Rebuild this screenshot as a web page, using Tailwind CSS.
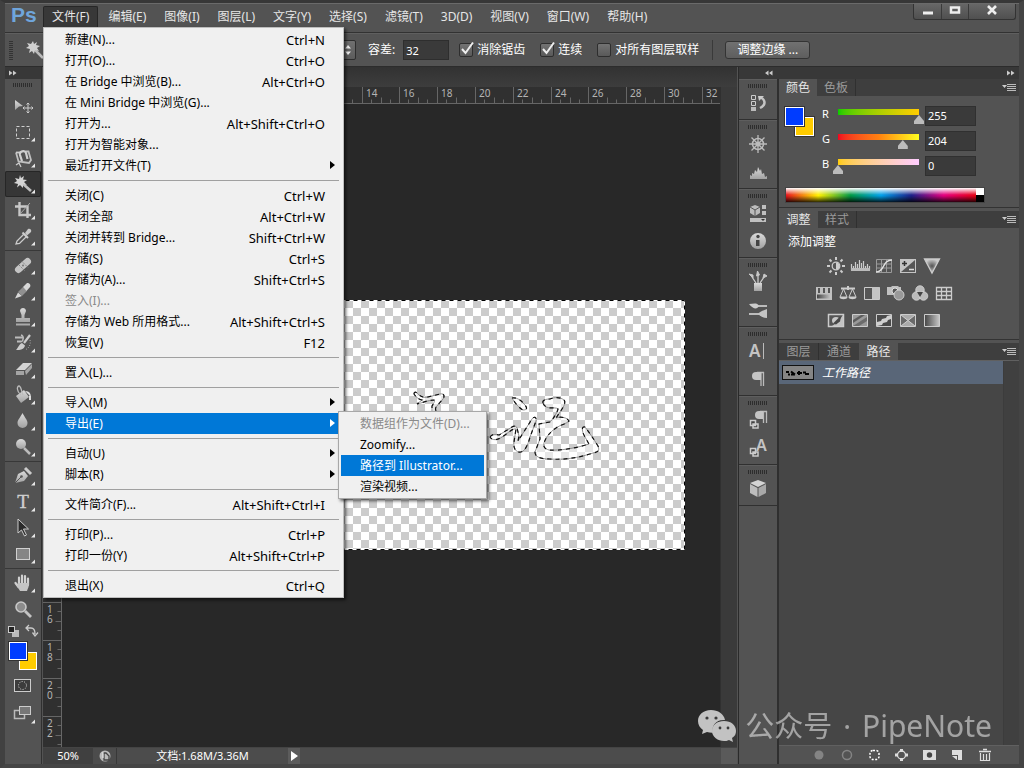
<!DOCTYPE html>
<html lang="zh-CN">

<head>
    <meta charset="UTF-8">
    <meta name="viewport" content="width=device-width, initial-scale=1.0">
    <title>Ps</title>
    <script src="https://cdn.jsdelivr.net/npm/@tailwindcss/browser@4"></script>
</head>

<body class="h-screen overflow-hidden bg-[#3a3a3a] font-['Noto_Sans','Noto_Sans_CJK_SC',sans-serif] text-[12px] leading-4 text-[#e6e6e6]">

    <!-- shared icon parts -->
    <svg width="0" height="0" class="absolute">
        <defs>
            <linearGradient id="metal" x1="0" y1="0" x2="0" y2="1">
                <stop offset="0" stop-color="#dadada" />
                <stop offset="1" stop-color="#a2a2a2" />
            </linearGradient>
            <linearGradient id="fade" x1="0" y1="0" x2="1" y2="0">
                <stop offset="0" stop-color="#444" />
                <stop offset="1" stop-color="#c8c8c8" />
            </linearGradient>
            <radialGradient id="glow">
                <stop offset="0" stop-color="#555" />
                <stop offset="1" stop-color="#ccc" />
            </radialGradient>
            <pattern id="checker" width="16" height="16" patternUnits="userSpaceOnUse">
                <rect width="16" height="16" fill="#fff" />
                <path d="M8 0h8v8h-8zM0 8h8v8H0z" fill="#ccc" />
            </pattern>
        </defs>
        <symbol id="corner" viewBox="0 0 36 26">
            <path d="M30 18.500v4h-4z" fill="#e8e8e8" />
        </symbol>
        <symbol id="flyout" viewBox="0 0 14 9">
            <path d="M0 2h5L2.500 5z" fill="#ccc" />
            <path d="M5 1.500h9M5 3.500h9M5 5.500h9M5 7.500h9" stroke="#bbb" />
        </symbol>
    </svg>

    <div class="flex h-full flex-col border-b-4 border-l-[5px] border-r-[5px] border-t-[3px] border-b-[#454545] border-l-[#414141] border-r-[#444] border-t-[#373737] bg-[#535353]">

        <!-- title and menu bar -->
        <header class="relative z-40 flex h-[30px] shrink-0 items-start border-b border-[#323232] border-t border-t-[#6a6a6a]">
            <div class="w-[38px] pl-1.5 pt-[3px] font-['Liberation_Sans',sans-serif] text-[21px] font-bold leading-4 text-[#6fa5dc]">Ps</div>
            <nav class="flex gap-0.5 pt-[2px] [&_button]:px-2 [&_button]:py-0.5 [&_button]:whitespace-nowrap">
                <div class="relative">
                    <button class="rounded-t-[2px] border-x border-t border-[#262626] bg-[#383838]">文件(F)</button>
                    <ul class="absolute left-0 top-[21px] w-[301px] border border-[#bdbdbd] bg-[#f0f0f0] px-0.5 py-px text-black shadow-[2px_2px_3px_rgba(0,0,0,0.6)] [&_button]:flex [&_button]:h-[21px] [&_button]:w-full [&_button]:items-center [&_button]:justify-between [&_button]:py-0 [&_button]:pl-[19px] [&_button]:pr-4 [&_hr]:mx-0.5 [&_hr]:my-1 [&_hr]:border-[#a0a0a0] [&_kbd]:font-[inherit] [&_kbd]:text-[13px]">
                        <li><button>新建(N)...<kbd>Ctrl+N</kbd></button></li>
                        <li><button>打开(O)...<kbd>Ctrl+O</kbd></button></li>
                        <li><button>在 Bridge 中浏览(B)...<kbd>Alt+Ctrl+O</kbd></button></li>
                        <li><button>在 Mini Bridge 中浏览(G)...</button></li>
                        <li><button>打开为...<kbd>Alt+Shift+Ctrl+O</kbd></button></li>
                        <li><button>打开为智能对象...</button></li>
                        <li class="relative"><button>最近打开文件(T)</button><svg class="absolute right-1.5 top-1.5" width="5" height="8"><path d="M0 0l5 4-5 4z" /></svg></li>
                        <li><hr></li>
                        <li><button>关闭(C)<kbd>Ctrl+W</kbd></button></li>
                        <li><button>关闭全部<kbd>Alt+Ctrl+W</kbd></button></li>
                        <li><button>关闭并转到 Bridge...<kbd>Shift+Ctrl+W</kbd></button></li>
                        <li><button>存储(S)<kbd>Ctrl+S</kbd></button></li>
                        <li><button>存储为(A)...<kbd>Shift+Ctrl+S</kbd></button></li>
                        <li><button disabled class="text-[#8a8a8a]">签入(I)...</button></li>
                        <li><button>存储为 Web 所用格式...<kbd>Alt+Shift+Ctrl+S</kbd></button></li>
                        <li><button>恢复(V)<kbd>F12</kbd></button></li>
                        <li><hr></li>
                        <li><button>置入(L)...</button></li>
                        <li><hr></li>
                        <li class="relative"><button>导入(M)</button><svg class="absolute right-1.5 top-1.5" width="5" height="8"><path d="M0 0l5 4-5 4z" /></svg></li>
                        <li class="relative">
                            <button class="bg-[#0078d7] text-white">导出(E)</button><svg class="absolute right-1.5 top-1.5" width="5" height="8"><path d="M0 0l5 4-5 4z" fill="#fff" /></svg>
                            <ul class="absolute left-full top-[-2px] -ml-[3px] w-[149px] border border-[#a8a8a8] bg-[#f0f0f0] px-0.5 py-px shadow-[2px_2px_3px_rgba(0,0,0,0.6)]">
                                <li><button disabled class="text-[#8a8a8a]">数据组作为文件(D)...</button></li>
                                <li><button>Zoomify...</button></li>
                                <li><button class="bg-[#0078d7] text-white">路径到 Illustrator...</button></li>
                                <li><button>渲染视频...</button></li>
                            </ul>
                        </li>
                        <li><hr></li>
                        <li class="relative"><button>自动(U)</button><svg class="absolute right-1.5 top-1.5" width="5" height="8"><path d="M0 0l5 4-5 4z" /></svg></li>
                        <li class="relative"><button>脚本(R)</button><svg class="absolute right-1.5 top-1.5" width="5" height="8"><path d="M0 0l5 4-5 4z" /></svg></li>
                        <li><hr></li>
                        <li><button>文件简介(F)...<kbd>Alt+Shift+Ctrl+I</kbd></button></li>
                        <li><hr></li>
                        <li><button>打印(P)...<kbd>Ctrl+P</kbd></button></li>
                        <li><button>打印一份(Y)<kbd>Alt+Shift+Ctrl+P</kbd></button></li>
                        <li><hr></li>
                        <li><button>退出(X)<kbd>Ctrl+Q</kbd></button></li>
                    </ul>
                </div>
                <button>编辑(E)</button>
                <button>图像(I)</button>
                <button>图层(L)</button>
                <button>文字(Y)</button>
                <button>选择(S)</button>
                <button>滤镜(T)</button>
                <button>3D(D)</button>
                <button>视图(V)</button>
                <button>窗口(W)</button>
                <button>帮助(H)</button>
            </nav>
            <div class="ml-auto mr-[3px] flex h-4 rounded-b-[3px] border border-t-0 border-[#333] bg-linear-to-b from-[#666] to-[#505050]">
                <button aria-label="最小化" class="flex w-7 justify-center border-r border-[#3a3a3a]"><svg width="12" height="14"><path d="M1 7.500h10v3H1z" fill="#eee" /></svg></button>
                <button aria-label="最大化" class="flex w-[27px] justify-center border-r border-[#3a3a3a]"><svg width="12" height="14"><path d="M2 3.500h8v5H2z" fill="none" stroke="#eee" stroke-width="2.500" /></svg></button>
                <button aria-label="关闭" class="flex w-[46px] justify-center"><svg width="12" height="14"><path d="M2 2l8 8M10 2l-8 8" stroke="#eee" stroke-width="2.600" /></svg></button>
            </div>
        </header>

        <!-- tool options -->
        <section class="relative flex h-[34px] shrink-0 items-center border-b border-[#2c2c2c] border-t border-t-[#5f5f5f] text-white">
            <div class="ml-1 h-5 w-1 bg-[repeating-linear-gradient(0deg,#333_0_1px,transparent_1px_2px)]"></div>
            <svg class="ml-2.5 shrink-0" width="24" height="24" viewBox="0 0 24 24">
                <path d="M11 11l9 9" stroke="#bbb" stroke-width="2.500" />
                <path d="M10 3l1 3 3-2-1 3 4 1-3 2 2 3-4-1-1 4-2-3-3 2 1-4-4-1 3-2-2-3 4 1z" fill="#d0d0d0" />
            </svg>
            <div class="relative ml-6 w-[285px]">
                <select aria-label="取样大小" class="block h-5 w-full appearance-none rounded-[2px] border border-[#2e2e2e] bg-linear-to-b from-[#707070] to-[#5c5c5c]"></select>
                <svg class="pointer-events-none absolute right-1 top-1" width="7" height="12"><path d="M0 4.500L3 1l3 3.500zM0 7.500L3 11l3-3.500z" fill="#eee" /></svg>
            </div>
            <label for="tolerance" class="ml-3">容差:</label>
            <input id="tolerance" value="32" class="ml-2 h-5 w-[46px] border border-[#2e2e2e] bg-[#3a3a3a] px-0.5 text-[11px]">
            <div class="ml-2.5 flex items-center gap-[15px] [&_label]:flex [&_label]:items-center [&_label]:gap-1 [&_span]:relative [&_span]:size-[14px] [&_input]:block [&_input]:size-[14px] [&_input]:appearance-none [&_input]:rounded-[2px] [&_input]:border [&_input]:border-[#2e2e2e] [&_input]:bg-linear-to-b [&_input]:from-[#737373] [&_input]:to-[#595959] [&_svg]:pointer-events-none [&_svg]:absolute [&_svg]:left-0.5 [&_svg]:-top-0.5">
                <label><span><input type="checkbox" checked><svg width="13" height="14"><path d="M1 8l3.500 4L12 1.500" fill="none" stroke="#eee" stroke-width="2" /></svg></span>消除锯齿</label>
                <label><span><input type="checkbox" checked><svg width="13" height="14"><path d="M1 8l3.500 4L12 1.500" fill="none" stroke="#eee" stroke-width="2" /></svg></span>连续</label>
                <label><span><input type="checkbox"></span>对所有图层取样</label>
            </div>
            <div class="ml-[13px] h-5 w-px bg-[#3a3a3a]"></div>
            <button class="ml-3 h-[18px] w-[85px] rounded-[3px] border border-[#343434] bg-linear-to-b from-[#717171] to-[#5e5e5e] leading-4">调整边缘 ...</button>
        </section>

        <div class="flex min-h-0 flex-1">

            <!-- toolbox -->
            <aside class="flex w-[37px] shrink-0 flex-col items-center border-r border-[#303030]">
                <div class="h-3 w-full bg-[#383838] pl-1"><svg width="8" height="12"><path d="M0 3.500L3.500 6 0 8.500zM4 3.500L7.500 6 4 8.500z" fill="#ccc" /></svg></div>
                <div class="mb-1.5 mt-1 h-1 w-5 bg-[repeating-linear-gradient(90deg,#2d2d2d_0_1px,transparent_1px_2px)]"></div>
                <div class="flex flex-col [&_button]:block [&_hr]:my-px [&_hr]:border-[#383838] [&_svg]:block">
                    <button aria-label="移动"><svg width="36" height="26"><path d="M10 7l8 6-4 .5L10 17z" fill="url(#metal)" /><path d="M23 10v10M18 15h10M21.500 11.500L23 10l1.500 1.500M21.500 18.500L23 20l1.500-1.500M19.500 13.500L18 15l1.500 1.500M26.500 13.500L28 15l-1.500 1.500" stroke="#ccc" fill="none" /></svg></button>
                    <button aria-label="选框"><svg width="36" height="26"><rect x="11.500" y="7.500" width="13" height="12" fill="none" stroke="#d0d0d0" stroke-dasharray="3 2" /><use href="#corner" /></svg></button>
                    <button aria-label="套索"><svg width="36" height="26"><path d="M11 7.500l2.500 9L24 18l2-3-2.500-8.500h-3" fill="none" stroke="#c0c0c0" stroke-width="1.800" /><path d="M11 7.500h5" stroke="#ccc" stroke-width="1.800" /><path d="M17 16l-2-6c-1-4 5-5 6-2l1.500 6" fill="none" stroke="#d0d0d0" stroke-width="2.200" /><path d="M11 20l3-2 2 4" fill="none" stroke="#ccc" stroke-width="1.300" /><use href="#corner" /></svg></button>
                    <button aria-label="魔棒" class="rounded-[2px] bg-[#363636] shadow-[inset_0_0_0_1px_#262626]"><svg width="36" height="26"><path d="M17 12l9 8" stroke="#c0c0c0" stroke-width="2.600" /><path d="M15 4l1 3 3-2-1 3.500 4 .5-3 2 3 3-4-1 0 4-3-3-3 2.500 1-3.500-4-1 3-2-2-3 4 1z" fill="#d4d4d4" /><use href="#corner" /></svg></button>
                    <button aria-label="裁剪"><svg width="36" height="26"><path d="M14.500 5v13H26M10 9.500h12.500V21" fill="none" stroke="#c8c8c8" stroke-width="2.400" /><path d="M15 17L25 6" stroke="#aaa" /><use href="#corner" /></svg></button>
                    <button aria-label="吸管"><svg width="36" height="26"><path d="M11 21l1-3 7-7 2.500 2.500-7 7z" fill="none" stroke="#ccc" stroke-width="1.300" /><path d="M17.500 9.500l5.500 5.500" stroke="#ccc" stroke-width="2" /><path d="M20 10l3-4c2-1 4 1 3 3l-4 3.500z" fill="#c8c8c8" /><use href="#corner" /></svg></button>
                    <hr>
                    <button aria-label="修复画笔"><svg width="36" height="26"><path d="M13.500 17.500l9-8" stroke="#c4c4c4" stroke-width="7" stroke-linecap="round" /><path d="M14 13l6 6M17 9.500l6 6" stroke="#808080" stroke-dasharray="1.500 1" /><circle cx="18" cy="13.500" r="1" fill="#777" /><use href="#corner" /></svg></button>
                    <button aria-label="画笔"><svg width="36" height="26"><path d="M10 20.500l3-6 4 3.500z" fill="#d8d8d8" /><path d="M13 14l5-5 4 4-5 5z" fill="#909090" /><path d="M18 9l3.500-3.500c2-1.500 5 1.500 3.500 3.500L21.500 13z" fill="#d8d8d8" /><use href="#corner" /></svg></button>
                    <button aria-label="图章"><svg width="36" height="26"><path d="M15 7c0-4 6-4 6 0l-1.500 4v3H25v4H11v-4h5.500v-3z" fill="url(#metal)" /><path d="M11 20.500h14" stroke="#aaa" stroke-width="2" /><use href="#corner" /></svg></button>
                    <button aria-label="历史画笔"><svg width="36" height="26"><path d="M10 7.500h8M12 11.500h4" stroke="#bbb" stroke-width="1.800" /><path d="M16 5c3 1 3 5 0 7" stroke="#bbb" stroke-width="1.500" fill="none" /><path d="M25 5l-6 8" stroke="#ccc" stroke-width="2.200" /><path d="M11 20c2-2 3-6 6-7l3 2.500c-1 4-5 5-9 4.500z" fill="#ccc" /><path d="M25 10c1 5-1 8-5 10" fill="none" stroke="#aaa" stroke-dasharray="1 1.500" /><use href="#corner" /></svg></button>
                    <button aria-label="橡皮擦"><svg width="36" height="26"><path d="M11 14l7-7h9l-7 7z" fill="#d4d4d4" /><path d="M11 15h8v4h-8zM20 15l7-7v4l-6 7z" fill="#a4a4a4" /><use href="#corner" /></svg></button>
                    <button aria-label="油漆桶"><svg width="36" height="26"><path d="M11 14l8-6 5 7-8 6z" fill="url(#metal)" /><path d="M16 13c-5-4-4-9-2-9s2 4 4 9" fill="none" stroke="#bbb" stroke-width="1.300" /><path d="M20 9c5 0 6 3 6 7l-2-3z" fill="#ddd" /><path d="M25 14v4" stroke="#ddd" stroke-width="2" /><use href="#corner" /></svg></button>
                    <button aria-label="模糊"><svg width="36" height="26"><path d="M17.500 5c2 4 5 7 5 10a5 5 0 0 1-10 0c0-3 3-6 5-10z" fill="url(#metal)" /><use href="#corner" /></svg></button>
                    <button aria-label="减淡"><svg width="36" height="26"><circle cx="16" cy="10" r="5" fill="url(#metal)" /><path d="M19 14l6 6" stroke="#bbb" stroke-width="2.500" /><use href="#corner" /></svg></button>
                    <hr>
                    <button aria-label="钢笔"><svg width="36" height="26"><path d="M10 20l3-9 6-3 4 5-4 5z" fill="url(#metal)" /><path d="M10 20l6-6" stroke="#555" /><circle cx="16.500" cy="13.500" r="1.300" fill="#555" /><path d="M20 5l6 6" stroke="#ccc" stroke-width="3" /><use href="#corner" /></svg></button>
                    <button aria-label="文字"><svg width="36" height="26"><text x="18" y="19" text-anchor="middle" font-family="Liberation Serif" font-size="19" fill="#cfcfcf" stroke="#cfcfcf" stroke-width=".4">T</text><use href="#corner" /></svg></button>
                    <button aria-label="路径选择"><svg width="36" height="26"><path d="M13 4v14l3.500-3 3 6 2-1-3-6h5z" fill="#2b2b2b" stroke="#ccc" /><use href="#corner" /></svg></button>
                    <button aria-label="矩形"><svg width="36" height="26"><rect x="11.500" y="7.500" width="13" height="11" fill="#858585" stroke="#d0d0d0" /><use href="#corner" /></svg></button>
                    <hr>
                    <button aria-label="抓手"><svg width="36" height="26"><path d="M14 15V7.500M17 14V5.500M20 14V6M23 15V8.500M13.500 17L10.500 13" stroke="#d0d0d0" stroke-width="2.200" stroke-linecap="round" /><path d="M13 13h11c0 4-1 5-2 8h-7l-3-5z" fill="#c4c4c4" /><use href="#corner" /></svg></button>
                    <button aria-label="缩放"><svg width="36" height="26"><circle cx="16" cy="11" r="5" fill="#8c8c8c" stroke="#c8c8c8" stroke-width="1.600" /><path d="M20 15l6 6" stroke="#c4c4c4" stroke-width="2.800" /></svg></button>
                </div>
                <button aria-label="默认与切换颜色"><svg class="block" width="36" height="19"><rect x="7" y="8" width="7" height="7" fill="#bbb" /><rect x="3.500" y="4.500" width="6" height="6" fill="#222" stroke="#ccc" /><path d="M22 6h4c3 0 4 2 4 6M24 3l-3 3 3 3M27.500 10.500L30 14l3-3.500" fill="none" stroke="#ccc" stroke-width="1.300" /></svg></button>
                <div class="relative mt-px h-7 w-7">
                    <button aria-label="背景色" class="absolute bottom-0 right-0 size-[18px] border border-white bg-[#ffcc00]"></button>
                    <button aria-label="前景色" class="absolute left-0 top-0 size-[18px] border border-white bg-[#003cff] outline outline-[#333]"></button>
                </div>
                <button aria-label="快速蒙版" class="mt-[9px]"><svg class="block" width="18" height="14"><rect x=".5" y=".5" width="16" height="12" fill="#3c3c3c" stroke="#ccc" /><circle cx="8.500" cy="6.500" r="4" fill="none" stroke="#ddd" stroke-dasharray="1 1.500" /></svg></button>
                <button aria-label="屏幕模式" class="mt-2"><svg class="block" width="36" height="26"><rect x="9.500" y="9.500" width="10" height="8" fill="none" stroke="#bbb" stroke-width="1.500" /><rect x="14.500" y="5.500" width="11" height="8" fill="#777" stroke="#ccc" /><use href="#corner" /></svg></button>
            </aside>

            <!-- document -->
            <main class="ml-px flex min-w-0 flex-1 flex-col bg-[#282828]">
                <div class="h-5 bg-linear-to-b from-[#323232] to-[#3d3d3d]"></div>
                <div class="flex min-h-0 flex-1">
                    <div class="grid min-w-0 flex-1 grid-cols-[19px_1fr] grid-rows-[17px_1fr]">
                        <div class="border-b border-r border-[#666] bg-[#303030]"></div>
                        <div class="overflow-hidden bg-[#303030]"><svg id="ruler-x" class="block" width="100%" height="17" font-family="Noto Sans" font-size="10" fill="#b4b4b4"></svg></div>
                        <div class="min-h-0 overflow-hidden bg-[#303030]"><svg id="ruler-y" class="block" width="19" height="100%" font-family="Noto Sans" font-size="10" fill="#b4b4b4"></svg></div>
                        <div class="min-h-0 overflow-hidden pl-[35px] pt-[196px]">
                            <svg class="block" width="588" height="250" viewBox="0 0 588 250" fill="none">
                                <rect width="588" height="250" fill="url(#checker)" />
                                <rect x=".5" y=".5" width="587" height="249" stroke="#fff" />
                                <rect x=".5" y=".5" width="587" height="249" stroke="#000" stroke-dasharray="4 4" />
                                <!-- handwriting selection outlines -->
                                <g id="ink" stroke="#777" stroke-width=".8" fill="#fff" fill-opacity=".5">
                                    <path d="M317 94c0-3 3-2 5 1 3 2 6 3 9 2l12-3c4-1 5 2 3 5l-7 8c-2 4 2 5 4 9l-8-3v-7c2-3 3-5 2-6-6 0-12 3-17 4l5-4c-4-1-6-3-8-6z" />
                                    <path d="M415 98c4-1 9 2 12 6 4 4 3 6-1 6-4-2-8-7-11-12z" />
                                    <path d="M393 137c2-3 5-3 9-2l10-6c4-3 7-4 8-1l2 8-1 5 14-22c2-3 5-2 4 2l-6 16c-2 8-5 14-9 15-5 1-8-4-7-10l2-13c-3-1-8 4-14 8-4 3-10 4-12 0z" />
                                    <path d="M446 103c-1-3 3-4 7-4 5-2 10-2 14 1 2 2 0 6-2 9l-6 9c5-2 12 0 13 3-3 3-9 4-13 7-6 4-10 9-12 15-1 4 1 6 5 7 10 1 28-2 40-6l-4-7c-3-5-4-11 0-10 4 5 8 11 13 19 2 5 0 6-5 7-15 5-29 7-43 6-10 0-15-2-15-7l5-13-1-15 11-2c4-4 7-9 8-13-3-3-12 2-15-6z" />
                                </g>
                            </svg>
                        </div>
                    </div>
                    <div class="w-[17px] border-l border-[#303030] bg-[#3a3a3a]"></div>
                </div>
                <footer class="flex h-[17px] shrink-0 items-stretch border-t border-[#444] bg-[#4c4c4c] text-[11px] leading-4 text-white">
                    <label class="flex w-[50px] bg-[#404040]"><input aria-label="缩放比例" value="50%" class="w-full bg-transparent text-center"></label>
                    <div class="flex w-6 items-center justify-center border-r border-[#383838]"><svg width="14" height="14"><circle cx="7" cy="7" r="5.500" fill="#bbb" /><path d="M5 4h3l3 3v4H6V4" fill="none" stroke="#444" stroke-width="1.300" /><path d="M5 3v6" stroke="#eee" /></svg></div>
                    <div class="w-[171px] text-center">文档:1.68M/3.36M</div>
                    <button aria-label="状态信息" class="flex w-3 items-center justify-center bg-[#5c5c5c]"><svg width="7" height="10"><path d="M0 0l7 5-7 5z" fill="#fff" /></svg></button>
                    <div class="ml-auto w-4 bg-[#5a5a5a]"></div>
                </footer>
            </main>

            <!-- panel dock -->
            <div class="ml-px flex shrink-0 flex-col border-l border-[#2a2a2a]">
                <div class="flex h-3 shrink-0 items-center bg-[#383838]">
                    <svg class="ml-[26px]" width="8" height="6"><path d="M3.500 .5L0 3l3.500 2.500zM7.500 .5L4 3l3.500 2.500z" fill="#ccc" /></svg>
                    <svg class="ml-auto mr-1" width="8" height="6"><path d="M0 .5L3.500 3 0 5.500zM4 .5L7.500 3 4 5.500z" fill="#ccc" /></svg>
                </div>
                <div class="flex min-h-0 flex-1">

                    <!-- collapsed panel icons -->
                    <div class="flex w-10 flex-col border-r-2 border-[#2f2f2f] [&>section]:flex [&>section]:flex-col [&>section]:items-center [&>section]:border-b [&>section]:border-[#303030] [&>section]:border-t [&>section]:border-t-[#5e5e5e] [&>section]:pb-0.5 [&_i]:mt-1 [&_i]:block [&_i]:h-1 [&_i]:w-5 [&_i]:bg-[repeating-linear-gradient(90deg,#2d2d2d_0_1px,transparent_1px_2px)] [&_button]:mt-px [&_svg]:block">
                        <section>
                            <i></i>
                            <button aria-label="历史记录"><svg width="28" height="28"><path d="M7.500 6.500h4v4h-4zM7.500 12.500h4v4h-4z" fill="none" stroke="#ccc" /><path d="M7 18h5v4H7z" fill="#bbb" /><path d="M16 19c6-3 6-8 0-11" stroke="#c4c4c4" stroke-width="2.500" fill="none" /><path d="M14 7h6l-5 5z" fill="#ccc" /></svg></button>
                        </section>
                        <section>
                            <i></i>
                            <button aria-label="导航器"><svg width="28" height="28"><circle cx="14" cy="14" r="5.500" fill="none" stroke="#bbb" stroke-width="1.500" /><path d="M14 5v18M5 14h18M7.500 7.500l13 13M20.500 7.500l-13 13" stroke="#bbb" stroke-width="1.300" /><circle cx="14" cy="14" r="2.500" fill="#bbb" /></svg></button>
                            <button aria-label="直方图"><svg width="28" height="27"><path d="M6 20v-4l2 1v-3l2 1 1-4 2 2 1-5 2 4 1-2 1 5 2-1 1 4 2-1v3z" fill="url(#metal)" /></svg></button>
                        </section>
                        <section>
                            <i></i>
                            <button aria-label="属性"><svg width="28" height="28"><path d="M6 8l5-2 5 2v6l-5 3-5-3z" fill="#bbb" /><path d="M6 8l5 3 5-3M11 11v6" stroke="#555" fill="none" /><path d="M18 6h4v4h-4zM18 12h4v4h-4zM6 19h16v4H6z" fill="#c0c0c0" /><path d="M17 20h4l-2 2z" fill="#333" /></svg></button>
                            <button aria-label="信息"><svg width="28" height="27"><circle cx="14" cy="13" r="8" fill="url(#metal)" /><circle cx="14" cy="8.500" r="1.700" fill="#444" /><path d="M12 12h3.500v6H12z" fill="#444" /></svg></button>
                        </section>
                        <section>
                            <i></i>
                            <button aria-label="画笔预设"><svg width="28" height="28"><path d="M10 15h8v8h-8z" fill="url(#metal)" /><path d="M12 15L8 9M14 15V7M16 15l4-6" stroke="#ccc" stroke-width="1.300" /><path d="M9 10L5 6l4 1zM12.500 8l1-5 2 4zM19 10l1-4 3 2z" fill="#c8c8c8" stroke="#c8c8c8" /></svg></button>
                            <button aria-label="画笔"><svg width="28" height="27"><path d="M13 9h10" stroke="#bbb" stroke-width="2" /><path d="M5 7c4 0 8-2 10 2-2 4-6 3-10-2z" fill="#ccc" /><path d="M5 17h10" stroke="#bbb" stroke-width="2" /><path d="M14 17c3-3 6-4 9-5v9c-3 0-6-1-9-4z" fill="#c4c4c4" /></svg></button>
                        </section>
                        <section>
                            <i></i>
                            <button aria-label="字符"><svg width="28" height="28"><text x="5" y="20" font-family="Noto Sans" font-weight="600" font-size="17" fill="#c4c4c4">A</text><path d="M19.500 6v16" stroke="#bbb" /></svg></button>
                            <button aria-label="段落"><svg width="28" height="27"><path d="M17 6v14M19.500 6v14M13 6.500h7" stroke="#bbb" stroke-width="1.300" /><path d="M17 6h-5a4 4 0 0 0 0 8h5z" fill="#c4c4c4" /></svg></button>
                        </section>
                        <section>
                            <i></i>
                            <button aria-label="段落样式"><svg width="28" height="28"><path d="M19.500 5v12M22.500 5v12M16 5.500h7" stroke="#bbb" stroke-width="1.300" /><path d="M19 5h-4a4 4 0 0 0 0 8h4z" fill="#c4c4c4" /><path d="M9 18h5v4H9zM6.500 14.500h5v5h-5z" fill="#444" stroke="#ccc" stroke-width="1.500" /></svg></button>
                            <button aria-label="字符样式"><svg width="28" height="27"><text x="12" y="16" font-family="Noto Sans" font-weight="600" font-size="16" fill="#c4c4c4">A</text><path d="M9 17h5v4H9zM6.500 13.500h5v5h-5z" fill="#444" stroke="#ccc" stroke-width="1.500" /></svg></button>
                        </section>
                        <section>
                            <i></i>
                            <button aria-label="3D"><svg width="28" height="28"><path d="M14 5l8 3-8 4-8-4z" fill="#d4d4d4" /><path d="M6 9l7.500 4v9L6 18z" fill="#bdbdbd" /><path d="M22 9l-7.500 4v9l7.500-4z" fill="#a8a8a8" /></svg></button>
                        </section>
                    </div>

                    <!-- open panels -->
                    <div class="flex w-[240px] flex-col gap-[3px] bg-[#535353]">

                        <section class="shrink-0 border-b border-[#333]">
                            <div class="flex h-[17px] bg-[#3e3e3e]">
                                <button class="w-[38px] bg-[#535353] text-center">颜色</button>
                                <button class="w-[39px] border-r border-[#303030] text-center text-[#9a9a9a]">色板</button>
                                <button aria-label="面板菜单" class="ml-auto mr-[3px]"><svg width="14" height="9"><use href="#flyout" /></svg></button>
                            </div>
                            <div class="flex px-1.5 pt-2.5">
                                <div class="relative mt-px size-[29px]">
                                    <button aria-label="背景色" class="absolute bottom-0 right-0 size-[19px] border border-white bg-[#ffcc00] outline outline-[#333]"></button>
                                    <button aria-label="前景色" class="absolute left-0 top-0 size-[19px] border border-white bg-[#003cff] outline outline-[#333]"></button>
                                </div>
                                <div class="ml-2 flex flex-col gap-[5px] text-[11px] text-white [&>div]:flex [&>div]:h-5 [&_label]:w-4 [&_span]:flex [&_span]:w-[81px] [&_span]:flex-col [&_span]:pt-[3px] [&_i]:h-1.5 [&_[type=range]]:-mx-[5px] [&_[type=range]]:h-2.5 [&_[type=range]]:appearance-none [&_[type=range]]:bg-transparent [&_[type=range]::-webkit-slider-thumb]:appearance-none [&_[type=range]::-webkit-slider-thumb]:size-[10px] [&_[type=range]::-webkit-slider-thumb]:bg-[#bcbcbc] [&_[type=range]::-webkit-slider-thumb]:[clip-path:polygon(50%_0,100%_60%,100%_90%,0_90%,0_60%)] [&_[type=text]]:ml-1.5 [&_[type=text]]:w-[51px] [&_[type=text]]:border [&_[type=text]]:border-[#303030] [&_[type=text]]:bg-[#3a3a3a] [&_[type=text]]:px-0.5">
                                    <div><label for="r">R</label><span><i class="bg-linear-to-r from-[#00cc00] to-[#ffcc00]"></i><input id="r" type="range" min="0" max="255" value="255"></span><input type="text" aria-label="R" value="255"></div>
                                    <div><label for="g">G</label><span><i class="bg-linear-to-r from-[#f00020] via-[#ff8010] to-[#ffff20]"></i><input id="g" type="range" min="0" max="255" value="204"></span><input type="text" aria-label="G" value="204"></div>
                                    <div><label for="b">B</label><span><i class="bg-linear-to-r from-[#ffcc00] to-[#ffccff]"></i><input id="b" type="range" min="0" max="255" value="0"></span><input type="text" aria-label="B" value="0"></div>
                                </div>
                            </div>
                            <div class="mb-1 ml-1.5 mt-[11px] flex h-4 w-[200px] border border-[#444]">
                                <div class="flex-1 bg-[linear-gradient(180deg,#ffffff_0%,#ffffff00_50%,#00000000_55%,#000000_110%),linear-gradient(90deg,#e8141c_0%,#fff000_17%,#009944_34%,#00a0e9_50%,#1d2088_66%,#e4007f_83%,#e60012_100%)]"></div>
                                <div class="w-2 bg-linear-to-b from-white from-50% to-black to-50%"></div>
                            </div>
                        </section>

                        <section class="h-[129px] shrink-0 border-b border-[#333]">
                            <div class="flex h-[17px] bg-[#3e3e3e]">
                                <button class="w-[39px] bg-[#535353] text-center">调整</button>
                                <button class="w-[39px] border-r border-[#303030] text-center text-[#9a9a9a]">样式</button>
                                <button aria-label="面板菜单" class="ml-auto mr-[3px]"><svg width="14" height="9"><use href="#flyout" /></svg></button>
                            </div>
                            <h2 class="pl-[9px] pt-1.5 text-white">添加调整</h2>
                            <div class="ml-[33px] mt-0.5 w-36 [&>div]:flex [&>div]:h-[27px] [&>div]:items-center [&>div]:justify-center [&_svg]:block">
                                <div>
                                    <button aria-label="亮度/对比度"><svg width="24" height="20"><circle cx="12" cy="10" r="3.800" fill="#555" stroke="#ccc" stroke-width="1.300" /><path d="M12 6.500a3.500 3.500 0 0 1 0 7z" fill="#ccc" /><path d="M12 1v3M12 16v3M3 10h3M18 10h3M5.500 3.500l2 2M16.500 14.500l2 2M5.500 16.500l2-2M16.500 5.500l2-2" stroke="#ccc" stroke-width="2" /></svg></button>
                                    <button aria-label="色阶"><svg width="24" height="20"><path d="M3.500 14V8M5.500 14v-4M7.500 14V6M9.500 14V8M11.500 14V4M13.500 14V7M15.500 14V5M17.500 14v-4M19.500 14V8M21.500 14v-4" stroke="#ccc" stroke-width="1.200" /><path d="M3 12h19v3H3z" fill="#bbb" /></svg></button>
                                    <button aria-label="曲线"><svg width="24" height="20"><path d="M4.500 3.500h15v13h-15zM4 8h16M4 12h16M9.500 4v12M14.500 4v12" fill="none" stroke="#9a9a9a" /><path d="M4 16c9 0 6-12 16-12" stroke="#e0e0e0" stroke-width="1.500" fill="none" /></svg></button>
                                    <button aria-label="曝光度"><svg width="24" height="20"><path d="M4 3h16v14H4z" fill="#c4c4c4" /><path d="M5 16L19 4v12z" fill="#555" /><path d="M6 7.500h5M8.500 5v5" stroke="#333" stroke-width="1.500" /><path d="M13 13.500h5" stroke="#ddd" stroke-width="1.500" /></svg></button>
                                    <button aria-label="自然饱和度"><svg width="24" height="20"><path d="M4.500 3h15L12 17z" fill="url(#glow)" stroke="#ccc" stroke-width="1.300" /></svg></button>
                                </div>
                                <div>
                                    <button aria-label="色相/饱和度"><svg width="24" height="20"><path d="M4 4h16v13H4z" fill="#c0c0c0" /><path d="M6 5h2v5H6zM11 5h2v5h-2zM16 5h2v5h-2z" fill="#555" /><path d="M5 11.500h14v4H5z" fill="url(#fade)" /></svg></button>
                                    <button aria-label="色彩平衡"><svg width="24" height="20"><path d="M5 5.500h14M12 3v4" stroke="#ccc" stroke-width="2" /><path d="M7.500 6L4 14h7zM16.500 6L13 14h7z" fill="none" stroke="#ccc" /><path d="M3.500 14h8c0 3-8 3-8 0zM12.500 14h8c0 3-8 3-8 0z" fill="#ccc" /></svg></button>
                                    <button aria-label="黑白"><svg width="24" height="20"><path d="M4.500 4.500h15v12h-15z" fill="#555" stroke="#ccc" /><path d="M12 4h7.500v12H12z" fill="#c4c4c4" /></svg></button>
                                    <button aria-label="照片滤镜"><svg width="24" height="20"><path d="M3 4h4l1-1h6l1 1h2v8H3z" fill="#c0c0c0" /><circle cx="11" cy="8" r="3" fill="#555" stroke="#ddd" /><circle cx="15" cy="12" r="5" fill="#999" stroke="#ccc" /></svg></button>
                                    <button aria-label="通道混合器"><svg width="24" height="20"><g fill="#bbb" stroke="#ddd" stroke-width=".7"><circle cx="12" cy="7" r="4.300" /><circle cx="8.500" cy="13" r="4.300" /><circle cx="15.500" cy="13" r="4.300" /></g><path d="M9 9h6l-3 5z" fill="#444" /></svg></button>
                                    <button aria-label="颜色查找"><svg width="24" height="20"><path d="M4 4h16v13H4z" fill="#505050" /><path d="M4.500 4.500h15v12h-15zM4 8.500h16M4 12.500h16M9.500 4v13M14.500 4v13" stroke="#ccc" stroke-width="1.300" fill="none" /></svg></button>
                                </div>
                                <div>
                                    <button aria-label="反相"><svg width="24" height="20"><path d="M4.500 4.500h15v12h-15z" fill="#555" stroke="#ccc" stroke-width="1.500" /><path d="M19 5v11H8l6-4z" fill="#c4c4c4" /><ellipse cx="12" cy="10.500" rx="4" ry="3.500" fill="#c8c8c8" /><path d="M15 7.500l2-1-1 5-4 3-3-1z" fill="#484848" /></svg></button>
                                    <button aria-label="色调分离"><svg width="24" height="20"><path d="M4.500 4.500h15v12h-15z" fill="#999" stroke="#ccc" /><path d="M5 10L13 5h4L5 13z" fill="#5c5c5c" /><path d="M5 16L19 7v4l-8 5z" fill="#6c6c6c" /></svg></button>
                                    <button aria-label="阈值"><svg width="24" height="20"><path d="M4.500 4.500h15v12h-15z" fill="#4a4a4a" stroke="#ccc" /><path d="M5 12l4-1 1-2 4-1 1-2 4-1v4l-3 1-1 2-4 1-1 2-5 1z" fill="#d0d0d0" /></svg></button>
                                    <button aria-label="可选颜色"><svg width="24" height="20"><path d="M4.500 4.500h15v12h-15z" fill="#6a6a6a" stroke="#ccc" /><path d="M5 5l7 6 7-6zM5 16l7-6 7 6z" fill="#aaa" /><path d="M5 5l14 11M19 5L5 16" stroke="#ccc" /></svg></button>
                                    <button aria-label="渐变映射"><svg width="24" height="20"><path d="M4.500 4.500h15v12h-15z" fill="url(#fade)" stroke="#ccc" /></svg></button>
                                </div>
                            </div>
                        </section>

                        <section class="flex min-h-0 flex-1 flex-col">
                            <div class="flex h-[17px] shrink-0 bg-[#3e3e3e]">
                                <button class="w-[40px] border-r border-[#303030] text-center text-[#9a9a9a]">图层</button>
                                <button class="w-[40px] text-center text-[#9a9a9a]">通道</button>
                                <button class="w-[39px] bg-[#535353] text-center">路径</button>
                                <button aria-label="面板菜单" class="ml-auto mr-[3px]"><svg width="14" height="9"><use href="#flyout" /></svg></button>
                            </div>
                            <div class="flex min-h-0 flex-1 border-t border-[#606060] bg-[#464646]">
                                <div class="flex-1">
                                    <div class="flex h-[23px] items-center bg-[#596678] pl-[3px]">
                                        <svg width="32" height="15"><rect x=".5" y=".5" width="31" height="14" fill="#858585" stroke="#111" /><path d="M4 7h3M6 9.500h2M9 6.500l4 3M9 9.500h4M15 8h5M17 6v4M21 7.500h3M23 9h4" stroke="#000" stroke-width="2" /></svg>
                                        <span class="ml-2 italic text-white">工作路径</span>
                                    </div>
                                </div>
                                <div class="w-4 border-l border-[#3c3c3c] bg-[#404040]"></div>
                            </div>
                            <div class="flex h-[19px] shrink-0 items-center justify-end border-t border-[#606060] pr-[20px]">
                                <button aria-label="用前景色填充路径"><svg width="27" height="16"><circle cx="13" cy="8" r="4.500" fill="#848484" /></svg></button>
                                <button aria-label="用画笔描边路径"><svg width="28" height="16"><circle cx="14" cy="8" r="4.500" fill="none" stroke="#848484" stroke-width="1.500" /></svg></button>
                                <button aria-label="将路径作为选区载入"><svg width="27" height="16"><rect x="9" y="3.500" width="9" height="9" rx="3" fill="none" stroke="#fff" stroke-width="1.500" stroke-dasharray="2 1.500" /></svg></button>
                                <button aria-label="从选区生成工作路径"><svg width="27" height="16"><circle cx="13.500" cy="8" r="4" fill="none" stroke="#ddd" stroke-width="1.300" /><path d="M12 2h3v3h-3zM12 11h3v3h-3zM7 6.500h3v3H7zM17 6.500h3v3h-3z" fill="#ddd" /></svg></button>
                                <button aria-label="添加蒙版"><svg width="28" height="16"><path d="M8 3h13v10H8z" fill="#ddd" /><circle cx="14.500" cy="8" r="2.700" fill="#444" /></svg></button>
                                <button aria-label="新建路径"><svg width="28" height="16"><path d="M9 3h10v10h-4V8H9z" fill="#ddd" /><path d="M9 9h5v4z" fill="#ddd" /></svg></button>
                                <button aria-label="删除路径"><svg width="28" height="16"><path d="M8 4.500h12M12 2.500h4" stroke="#ddd" stroke-width="1.600" /><path d="M9.500 6v7.500h9V6M12.500 7v6M15.500 7v6" fill="none" stroke="#ddd" stroke-width="1.200" /></svg></button>
                            </div>
                        </section>
                    </div>
                </div>
            </div>
        </div>
    </div>

    <!-- watermark -->
    <div class="pointer-events-none fixed bottom-6 right-8 z-50 flex items-center gap-2 text-[29px] leading-9 text-white/50">
        <svg width="40" height="34" viewBox="0 0 40 34">
            <path d="M14 1C6 1 1 6 1 12c0 4 2 7 5 9l-1 4 5-2c2 .6 4 1 6 .8C14 16 20 10 28 11 27 5 21 1 14 1z" fill="#c2c2c2" />
            <path d="M27 12c-7 0-12 4-12 10s6 10 12 10c2 0 3 0 5-1l4 2-1-4c3-2 4-4 4-7 0-6-5-10-12-10z" fill="#c2c2c2" />
            <g fill="#3a3a3a"><circle cx="10" cy="9" r="1.600" /><circle cx="19" cy="9" r="1.600" /><circle cx="23" cy="19" r="1.400" /><circle cx="31" cy="19" r="1.400" /></g>
        </svg>
        <p class="flex items-baseline gap-[11px]"><span>公众号</span><span>·</span><span class="text-[30px]">PipeNote</span></p>
    </div>

    <script>
        // rulers count in centimetres, one labelled step every 2 cm
        const STEP = 37.8;

        function drawRuler(svg, origin, vertical) {
            const size = vertical ? svg.parentElement.clientHeight : svg.parentElement.clientWidth;
            const depth = vertical ? 18.5 : 16.5;
            let out = '';
            for (let i = -Math.floor(origin / STEP); origin + i * STEP < size; i++) {
                const at = Math.round(origin + i * STEP);
                for (let q = 0; q < 4; q++) {
                    const p = Math.round(at + q * STEP / 4) + 0.5;
                    const len = q === 0 ? depth : q === 2 ? 6 : 4;
                    out += vertical
                        ? `<path d="M${depth - len} ${p}H${depth}" stroke="#666"/>`
                        : `<path d="M${p} ${depth - len}V${depth}" stroke="#666"/>`;
                }
                const label = String(Math.abs(i * 2));
                if (vertical) {
                    [...label].forEach((c, n) => out += `<text x="4" y="${at + 11 + n * 10}">${c}</text>`);
                } else if (at + 16 < size) {
                    out += `<text x="${at + 4}" y="10">${label}</text>`;
                }
            }
            out += vertical
                ? `<path d="M${depth} 0V${size}" stroke="#666"/>`
                : `<path d="M0 ${depth}H${size}" stroke="#666"/>`;
            svg.innerHTML = out;
        }

        // redraw whenever the document area changes size
        function watchRuler(id, origin, vertical) {
            const svg = document.getElementById(id);
            new ResizeObserver(() => drawRuler(svg, origin, vertical)).observe(svg.parentElement);
        }

        watchRuler('ruler-x', 35, false);
        watchRuler('ruler-y', 196, true);

        // marching ants over the thin outline
        const ink = document.getElementById('ink');
        const ants = ink.cloneNode(true);
        ants.removeAttribute('id');
        ants.setAttribute('fill', 'none');
        ants.setAttribute('stroke', '#111');
        ants.setAttribute('stroke-width', '1.200');
        ants.setAttribute('stroke-dasharray', '4 4');
        ink.after(ants);
    </script>
</body>

</html>
